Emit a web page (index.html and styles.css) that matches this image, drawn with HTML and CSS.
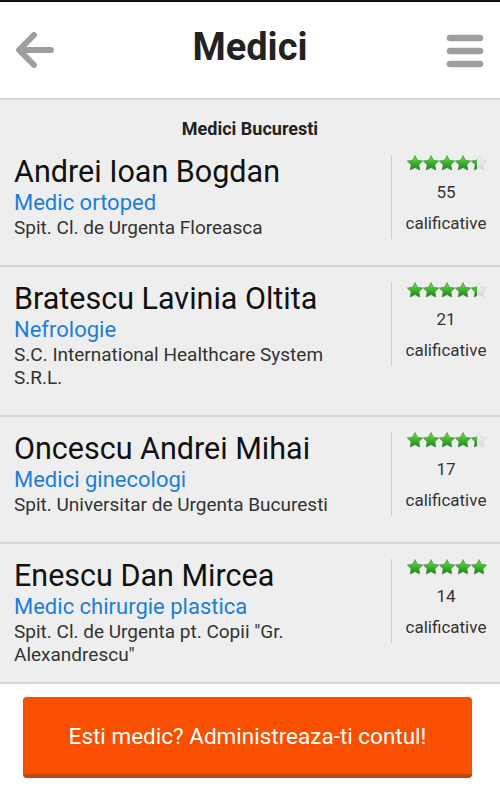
FILE: index.html
```html
<!DOCTYPE html>
<html lang="ro">
<head>
<meta charset="utf-8">
<title>Medici</title>
<link rel="stylesheet" href="styles.css">
</head>
<body>
<svg class="defs" width="0" height="0" aria-hidden="true">
  <defs>
    <linearGradient id="gFull" x1="0" y1="0" x2="0" y2="1">
      <stop offset="0" stop-color="#7ddc55"/>
      <stop offset="0.5" stop-color="#3fb52c"/>
      <stop offset="1" stop-color="#16881a"/>
    </linearGradient>
    <linearGradient id="gEmpty" x1="0" y1="0" x2="0" y2="1">
      <stop offset="0" stop-color="#f4f4f4"/>
      <stop offset="1" stop-color="#d8d8d8"/>
    </linearGradient>
    <symbol id="star" viewBox="0 0 16 16">
      <polygon points="8,0.6 10.35,5.26 15.61,6.03 11.8,9.74 12.7,14.97 8,12.5 3.3,14.97 4.2,9.74 0.39,6.03 5.65,5.26"/>
    </symbol>
    <clipPath id="c44"><rect x="0" y="0" width="70" height="16"/></clipPath>
    <clipPath id="c50"><rect x="0" y="0" width="80" height="16"/></clipPath>
  </defs>
</svg>

<div class="statusline"></div>
<header class="topbar">
  <svg class="icon back" width="40" height="42" viewBox="0 0 40 42">
    <path d="M36 21H5M19 6L4 21L19 36" fill="none" stroke="#9e9e9e" stroke-width="6" stroke-linecap="round" stroke-linejoin="round"/>
  </svg>
  <h1 class="title">Medici</h1>
  <svg class="icon menu" width="40" height="40" viewBox="0 0 40 40">
    <path d="M5 7H35M5 20H35M5 33H35" fill="none" stroke="#9e9e9e" stroke-width="6.5" stroke-linecap="round"/>
  </svg>
</header>

<main class="list">
  <div class="list-title">Medici Bucuresti</div>

  <div class="row">
    <div class="info">
      <div class="name">Andrei Ioan Bogdan</div>
      <div class="spec">Medic ortoped</div>
      <div class="addr">Spit. Cl. de Urgenta Floreasca</div>
    </div>
    <div class="rating">
      <svg class="stars" width="80" height="16" viewBox="0 0 80 16">
        <g fill="url(#gEmpty)" stroke="#cfcfcf" stroke-width="0.5"><use href="#star" x="0" width="16" height="16"/><use href="#star" x="16" width="16" height="16"/><use href="#star" x="32" width="16" height="16"/><use href="#star" x="48" width="16" height="16"/><use href="#star" x="64" width="16" height="16"/></g>
        <g fill="url(#gFull)" stroke="#1e7d1e" stroke-width="0.5" clip-path="url(#c44)"><use href="#star" x="0" width="16" height="16"/><use href="#star" x="16" width="16" height="16"/><use href="#star" x="32" width="16" height="16"/><use href="#star" x="48" width="16" height="16"/><use href="#star" x="64" width="16" height="16"/></g>
      </svg>
      <div class="count">55</div>
      <div class="label">calificative</div>
    </div>
  </div>

  <div class="row">
    <div class="info">
      <div class="name">Bratescu Lavinia Oltita</div>
      <div class="spec">Nefrologie</div>
      <div class="addr">S.C. International Healthcare System S.R.L.</div>
    </div>
    <div class="rating">
      <svg class="stars" width="80" height="16" viewBox="0 0 80 16">
        <g fill="url(#gEmpty)" stroke="#cfcfcf" stroke-width="0.5"><use href="#star" x="0" width="16" height="16"/><use href="#star" x="16" width="16" height="16"/><use href="#star" x="32" width="16" height="16"/><use href="#star" x="48" width="16" height="16"/><use href="#star" x="64" width="16" height="16"/></g>
        <g fill="url(#gFull)" stroke="#1e7d1e" stroke-width="0.5" clip-path="url(#c44)"><use href="#star" x="0" width="16" height="16"/><use href="#star" x="16" width="16" height="16"/><use href="#star" x="32" width="16" height="16"/><use href="#star" x="48" width="16" height="16"/><use href="#star" x="64" width="16" height="16"/></g>
      </svg>
      <div class="count">21</div>
      <div class="label">calificative</div>
    </div>
  </div>

  <div class="row">
    <div class="info">
      <div class="name">Oncescu Andrei Mihai</div>
      <div class="spec">Medici ginecologi</div>
      <div class="addr">Spit. Universitar de Urgenta Bucuresti</div>
    </div>
    <div class="rating">
      <svg class="stars" width="80" height="16" viewBox="0 0 80 16">
        <g fill="url(#gEmpty)" stroke="#cfcfcf" stroke-width="0.5"><use href="#star" x="0" width="16" height="16"/><use href="#star" x="16" width="16" height="16"/><use href="#star" x="32" width="16" height="16"/><use href="#star" x="48" width="16" height="16"/><use href="#star" x="64" width="16" height="16"/></g>
        <g fill="url(#gFull)" stroke="#1e7d1e" stroke-width="0.5" clip-path="url(#c44)"><use href="#star" x="0" width="16" height="16"/><use href="#star" x="16" width="16" height="16"/><use href="#star" x="32" width="16" height="16"/><use href="#star" x="48" width="16" height="16"/><use href="#star" x="64" width="16" height="16"/></g>
      </svg>
      <div class="count">17</div>
      <div class="label">calificative</div>
    </div>
  </div>

  <div class="row">
    <div class="info">
      <div class="name">Enescu Dan Mircea</div>
      <div class="spec">Medic chirurgie plastica</div>
      <div class="addr">Spit. Cl. de Urgenta pt. Copii "Gr. Alexandrescu"</div>
    </div>
    <div class="rating">
      <svg class="stars" width="80" height="16" viewBox="0 0 80 16">
        <g fill="url(#gEmpty)" stroke="#cfcfcf" stroke-width="0.5"><use href="#star" x="0" width="16" height="16"/><use href="#star" x="16" width="16" height="16"/><use href="#star" x="32" width="16" height="16"/><use href="#star" x="48" width="16" height="16"/><use href="#star" x="64" width="16" height="16"/></g>
        <g fill="url(#gFull)" stroke="#1e7d1e" stroke-width="0.5" clip-path="url(#c50)"><use href="#star" x="0" width="16" height="16"/><use href="#star" x="16" width="16" height="16"/><use href="#star" x="32" width="16" height="16"/><use href="#star" x="48" width="16" height="16"/><use href="#star" x="64" width="16" height="16"/></g>
      </svg>
      <div class="count">14</div>
      <div class="label">calificative</div>
    </div>
  </div>
</main>

<footer class="footer">
  <button class="cta" type="button">Esti medic? Administreaza-ti contul!</button>
</footer>
</body>
</html>
```
FILE: styles.css
```css
html, body {
  margin: 0;
  padding: 0;
}
body {
  background: #eeeeee;
  font-family: Roboto, "Noto Sans", "Liberation Sans", sans-serif;
  width: 500px;
  height: 790px;
  overflow: hidden;
}
.defs {
  display: block;
  width: 0;
  height: 0;
  overflow: hidden;
}
.statusline {
  height: 2px;
  background: #111;
}
.topbar {
  height: 96px;
  background: #fff;
  border-bottom: 2px solid #d6d6d6;
  display: flex;
  align-items: center;
  justify-content: space-between;
  padding: 0 15px 0 15px;
  box-sizing: content-box;
}
.icon {
  display: block;
  flex: none;
}
.menu {
  margin-top: 2px;
}
.title {
  margin: 0;
  font-size: 38px;
  font-weight: 700;
  color: #222;
  line-height: 44px;
  padding-bottom: 6px;
}
.list-title {
  text-align: center;
  font-weight: 700;
  font-size: 18px;
  line-height: 22px;
  color: #222;
  padding-top: 18px;
}
.row {
  display: flex;
  align-items: flex-start;
  padding: 15px 0 26px 14px;
  border-bottom: 2px solid #d6d6d6;
}
.info {
  flex: 1;
  min-width: 0;
  padding-right: 22px;
}
.name {
  font-size: 30.5px;
  line-height: 34px;
  color: #111;
}
.spec {
  font-size: 22px;
  line-height: 26px;
  color: #1c7ed6;
  margin-top: 1px;
}
.addr {
  font-size: 19px;
  line-height: 23px;
  color: #333;
}
.rating {
  flex: none;
  width: 108px;
  border-left: 1px solid #cfcfcf;
  display: flex;
  flex-direction: column;
  align-items: center;
  font-size: 17px;
  color: #333;
}
.stars {
  display: block;
  margin-left: 2px;
}
.count, .label {
  line-height: 31px;
}
.count {
  margin-top: 6px;
}
.footer {
  position: fixed;
  left: 0;
  right: 0;
  bottom: 0;
  height: 93px;
  background: #fff;
  border-top: 2px solid #d6d6d6;
  padding: 13px 0 0 23px;
  box-sizing: content-box;
}
.cta {
  display: block;
  width: 449px;
  height: 81px;
  border: none;
  border-bottom: 4px solid #c34710;
  border-radius: 4px;
  background: #f84f00;
  color: #fff;
  font-family: Roboto, "Noto Sans", "Liberation Sans", sans-serif;
  font-size: 22.5px;
  padding: 0;
  box-sizing: border-box;
  box-shadow: 0 0 1px rgba(0,0,0,0.3);
}
```
